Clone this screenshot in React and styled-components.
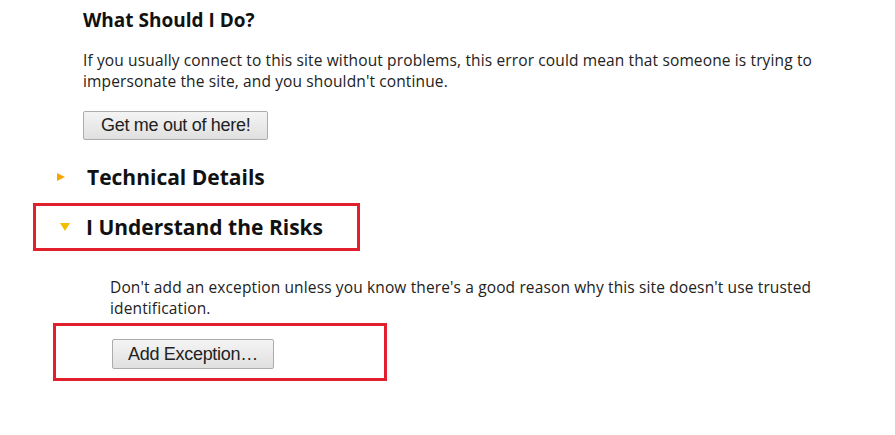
import styled, { createGlobalStyle } from 'styled-components';

const GlobalStyle = createGlobalStyle`
  html, body {
    margin: 0;
    padding: 0;
    background: #fff;
  }
  body {
    font-family: 'Open Sans', 'Noto Sans', sans-serif;
    color: #1b1b1b;
  }
`;

export default function App() {
  return (
    <Page>
      <GlobalStyle />
      <Intro>
        <Title>What Should I Do?</Title>
        <Text $width={750}>
          If you usually connect to this site without problems, this error could mean that
          someone is trying to impersonate the site, and you shouldn't continue.
        </Text>
        <Button $pad={17}>Get me out of here!</Button>
      </Intro>

      <Expander $left={57} $gap={22}>
        <Twisty $open={false} />
        <Heading>Technical Details</Heading>
      </Expander>

      <Highlight $width={327} $height={48}>
        <Expander $left={24} $gap={16}>
          <Twisty $open />
          <Heading>I Understand the Risks</Heading>
        </Expander>
      </Highlight>

      <Risks>
        <Text $width={725}>
          Don't add an exception unless you know there's a good reason why this site doesn't
          use trusted identification.
        </Text>
      </Risks>

      <Highlight $tight $width={334} $height={58}>
        <ButtonSlot>
          <Button $pad={15}>Add Exception…</Button>
        </ButtonSlot>
      </Highlight>
    </Page>
  );
}

const Page = styled.div`
  padding-top: 6px;
  height: 435px;
  box-sizing: border-box;
`;

const Intro = styled.section`
  margin-left: 83px;
`;

const Title = styled.h2`
  margin: 0 0 16px;
  font-size: 19px;
  font-weight: 700;
  line-height: 28px;
  color: #111;
`;

const Text = styled.p`
  margin: 0;
  width: ${(p) => p.$width}px;
  font-size: 15.5px;
  line-height: 21px;
  letter-spacing: 0.13px;
  color: #222;
`;

const Button = styled.button`
  display: block;
  margin-top: 19px;
  height: 29px;
  padding: 0 ${(p) => p.$pad}px;
  font-family: 'Liberation Sans', Arial, sans-serif;
  font-size: 18px;
  letter-spacing: -0.3px;
  color: #222;
  background: linear-gradient(#f4f4f4, #e0e0e0);
  border: 1px solid #acacac;
  border-radius: 2px;
`;

const Expander = styled.div`
  display: flex;
  align-items: center;
  gap: ${(p) => p.$gap}px;
  margin-left: ${(p) => p.$left}px;
  margin-top: 23px;
`;

const Heading = styled.h3`
  margin: 0;
  font-size: 21px;
  font-weight: 700;
  line-height: 28px;
  color: #111;
`;

const Twisty = styled.span`
  width: 0;
  height: 0;
  ${(p) =>
    p.$open
      ? `
    border-left: 5px solid transparent;
    border-right: 5px solid transparent;
    border-top: 8px solid #f5bd00;
  `
      : `
    border-top: 4px solid transparent;
    border-bottom: 4px solid transparent;
    border-left: 8px solid #f5a700;
  `}
`;

const Highlight = styled.div`
  margin-left: ${(p) => (p.$tight ? 53 : 33)}px;
  margin-top: ${(p) => (p.$tight ? 4 : 12)}px;
  width: ${(p) => p.$width}px;
  height: ${(p) => p.$height}px;
  box-sizing: border-box;
  border: 3px solid #e2202d;
  display: flex;
  align-items: ${(p) => (p.$tight ? 'flex-start' : 'center')};
  ${Expander} {
    margin-top: 0;
  }
`;

const Risks = styled.section`
  margin-left: 110px;
  margin-top: 26px;
`;

const ButtonSlot = styled.div`
  padding: 13px 0 0 56px;
  ${Button} {
    margin-top: 0;
    height: 30px;
  }
`;
